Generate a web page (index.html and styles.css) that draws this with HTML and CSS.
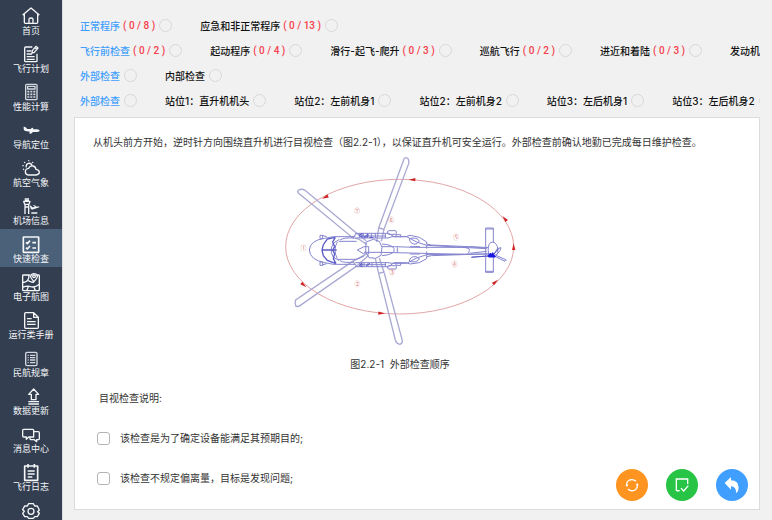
FILE: index.html
```html
<!DOCTYPE html>
<html lang="zh-CN">
<head>
<meta charset="utf-8">
<meta name="viewport" content="width=device-width, initial-scale=1">
<title>快速检查</title>
<link rel="stylesheet" href="styles.css">
</head>
<body>
<nav class="sidebar">
  <a class="nav-item" href="#"><svg class="nav-icon" viewBox="0 0 54 54"><path d="M2 24 27 3l25 21M7 21v25q0 3 3 3h34q3 0 3-3V21M21 48V37q0-4 6-4t6 4v11"/></svg><span>首页</span></a>
  <a class="nav-item" href="#"><svg class="nav-icon" viewBox="0 0 54 54"><path d="M31 6H11q-3 0-3 3v38q0 3 3 3h31q3 0 3-3V26M14 18h14M14 27h16M14 35h24M14 43h24"/><path d="M30 24l1-7L42 4l6 5-11 13zM39 8l6 5"/></svg><span>飞行计划</span></a>
  <a class="nav-item" href="#"><svg class="nav-icon soft" viewBox="0 0 54 54"><rect x="11" y="4" width="34" height="46" rx="3"/><path d="M17 10h22v8H17z"/><path class="dots" d="M16 26h6m3 0h6m3 0h6M16 34h6m3 0h6m3 0h6M16 42h6m3 0h6m3 0h6"/></svg><span>性能计算</span></a>
  <a class="nav-item" href="#"><svg class="nav-icon" viewBox="0 0 54 54"><path class="fill" d="M5 17l5 1 6 6 10 0 4-4 4 1-1 4 12 0q8 1 8 4t-7 4l-13 0-6 5-6-1 3-5-14-2q-5-2-5-6z"/></svg><span>导航定位</span></a>
  <a class="nav-item" href="#"><svg class="nav-icon" viewBox="0 0 54 54"><path d="M19 48q-9-1-9-10t10-10q4-9 13-7 8 2 9 10 10 2 10 9t-10 8zM13 25q-2-10 7-12 7-1 10 6M20 4v3M7 9l2 3M1 20h4M33 9l-2 3M3 32l3-2"/></svg><span>航空气象</span></a>
  <a class="nav-item" href="#"><svg class="nav-icon" viewBox="0 0 54 54"><path d="M8 6h13M5 13h19l-3 9H8zM9 23v28M20 23v28M10 30h9"/><path class="fill" d="M8 8h13v4H8zM23 25l4 1 4 5 8-1-6-5 3-1 9 5 6-1 1 3-22 7-4-3zM28 46h18v4H28z"/></svg><span>机场信息</span></a>
  <a class="nav-item active" href="#" aria-current="page"><svg class="nav-icon bold" viewBox="0 0 54 54"><rect x="4" y="6" width="46" height="46" rx="1"/><path d="M12 22l4 4 8-9M12 38l4 4 8-9M31 23h11M31 39h11"/></svg><span>快速检查</span></a>
  <a class="nav-item" href="#"><svg class="nav-icon" viewBox="0 0 54 54"><path d="M24 6H4q-2 0-2 2v42q0 3 3 3h44q3 0 3-3V8q0-2-3-2h-3M2 29q13-2 17-11 3-6 1-12M2 43q14-6 24-2 12 4 26-7M17 22l11 5 8 1M20 39l-6 14M36 42l4 11M36 26Q25 14 26 9q2-7 10-7t10 7q1 5-10 17z"/><circle cx="36" cy="10" r="4"/></svg><span>电子航图</span></a>
  <a class="nav-item" href="#"><svg class="nav-icon" viewBox="0 0 54 54"><path d="M35 5H11q-3 0-3 3v41q0 3 3 3h35q3 0 3-3V19zM35 5v14h14M15 23h14M15 32h26M15 40h26"/></svg><span>运行类手册</span></a>
  <a class="nav-item" href="#"><svg class="nav-icon soft" viewBox="0 0 54 54"><rect x="11" y="10" width="34" height="40" rx="4"/><path d="M17 19h3M24 19h16M17 26h3M24 26h16M17 33h3M24 33h16M17 41h3M24 41h16"/></svg><span>民航规章</span></a>
  <a class="nav-item" href="#"><svg class="nav-icon" viewBox="0 0 54 54"><path d="M35 6L20 22h8v16h14V22h8zM19 44h32M19 51h32"/></svg><span>数据更新</span></a>
  <a class="nav-item" href="#"><svg class="nav-icon" viewBox="0 0 54 54"><path d="M35 36H20l-7 7v-7H5q-3 0-3-3V16q0-3 3-3h27q3 0 3 3zM35 20h14q3 0 3 3v18q0 3-3 3h-5v6l-7-6H27q-3 0-3-3v-5"/></svg><span>消息中心</span></a>
  <a class="nav-item" href="#"><svg class="nav-icon bold" viewBox="0 0 54 54"><path d="M8 9h39v43H8zM18 3v11M37 3v11M17 24h21M17 33h21M17 42h14"/></svg><span>飞行日志</span></a>
  <a class="nav-item" href="#" aria-label="设置"><svg class="nav-icon" viewBox="0 0 54 54"><path d="M20 8h14l4 7h8l6 12-5 5 5 5-6 10h-8l-4 5H20l-4-5H8L2 37l5-6-5-5 6-11h8z"/><circle cx="27" cy="31" r="9"/></svg></a>
</nav>

<main class="main">
  <div class="tabs">
    <div class="tab-row">
      <button class="tab active">正常程序<span class="count">( 0 / 8 )</span><i class="ring"></i></button>
      <button class="tab">应急和非正常程序<span class="count">( 0 / 13 )</span><i class="ring"></i></button>
    </div>
    <div class="tab-row">
      <button class="tab active">飞行前检查<span class="count">( 0 / 2 )</span><i class="ring"></i></button>
      <button class="tab">起动程序<span class="count">( 0 / 4 )</span><i class="ring"></i></button>
      <button class="tab">滑行-起飞-爬升<span class="count">( 0 / 3 )</span><i class="ring"></i></button>
      <button class="tab">巡航飞行<span class="count">( 0 / 2 )</span><i class="ring"></i></button>
      <button class="tab">进近和着陆<span class="count">( 0 / 3 )</span><i class="ring"></i></button>
      <button class="tab">发动机</button>
    </div>
    <div class="tab-row">
      <button class="tab active">外部检查<i class="ring"></i></button>
      <button class="tab">内部检查<i class="ring"></i></button>
    </div>
    <div class="tab-row">
      <button class="tab active">外部检查<i class="ring"></i></button>
      <button class="tab">站位1：直升机机头<i class="ring"></i></button>
      <button class="tab">站位2：左前机身1<i class="ring"></i></button>
      <button class="tab">站位2：左前机身2<i class="ring"></i></button>
      <button class="tab">站位3：左后机身1<i class="ring"></i></button>
      <button class="tab">站位3：左后机身2<i class="ring"></i></button>
    </div>
  </div>

  <section class="panel">
    <p class="intro">从机头前方开始，逆时针方向围绕直升机进行目视检查（图2.2-1），以保证直升机可安全运行。外部检查前确认地勤已完成每日维护检查。</p>
    <figure class="figure">
      <svg class="diagram" viewBox="0 0 720 600" role="img" aria-label="外部检查顺序">
        <defs>
          <path id="arrow" d="M-12 0 8-5V5z"/>
        </defs>
        <ellipse class="route" cx="359" cy="290" rx="342" ry="202"/>
        <g class="arrows">
          <use href="#arrow" transform="translate(137 141) rotate(-25)"/>
          <use href="#arrow" transform="translate(70 404) rotate(220)"/>
          <use href="#arrow" transform="translate(303 490) rotate(183)"/>
          <use href="#arrow" transform="translate(398 89)"/>
          <use href="#arrow" transform="translate(675 207) rotate(50)"/>
          <use href="#arrow" transform="translate(701 292) rotate(90)"/>
          <use href="#arrow" transform="translate(645 397) rotate(140)"/>
        </g>
        <g class="blades">
          <path d="M230 250 75 121q-9-6-19-1-5 4-1 9l163 134zM230 250l28 22M218 263l18 4 24 16"/>
          <path d="M296 234 372 27q4-8 12-1 4 7 2 15L312 238zM296 234l16 4-8 36M296 234l-6 42"/>
          <path d="M218 334 47 450q-4 9 1 19 6 2 13-3L230 348zM218 334l38-20M230 348l36-32"/>
          <path d="M296 370 346 570q4 12 14 13 8-3 7-11L312 366zM296 370l16-4-14-42M296 370l-10-44"/>
        </g>
        <g class="body">
          <path d="M134 265q-44 6-46 35 2 30 46 38M134 265l26-5h66M134 338l26 5h66M176 274h54M174 328h54q14-4 24-10"/>
          <path d="M172 276q-14 24 0 50M178 268l-18 12-6 14v14l6 14 18 10M180 270q12-8 42-6M180 332q12 8 42 4"/>
          <path d="M120 256h8v10h-8zM120 336h8v10h-8zM126 256l14 4M126 345l14-4"/>
          <path d="M232 300l20-10h14v22h-14zM258 276l22-8 18 6 8 18-3 24-16 9-20-2-10-16z"/>
          <path d="M306 282q32 2 36 14v9q-10 10-36 12M306 290h38l60 2h140q28 1 24 9-2 14-14 12l-250-6h-52M352 292v16"/>
          <path d="M226 250h100l16 10h36l12-4 28 6 22 14v6l14 3 180 8M226 350h100l16-12h36l12 4 28-4 22-12v-6l14-3 180-6"/>
          <path d="M226 264h98l12-4h44l30 16 30 10 180 10M226 338h98l12 2h44l30-16 30-10 190-2"/>
          <path d="M326 242h20q3 0 3 4v4q0 3-3 3h-20q-3 0-3-3v-4q0-4 3-4zM326 347h20q3 0 3 3v4q0 3-3 3h-20q-3 0-3-3v-4q0-3 3-3zM388 266q24-6 30 8l-10 8q-18 2-20-16zM388 334q24 6 30-8l-10-6q-18-2-20 14zM390 290h30M390 312h30"/>
          <path d="M238 250v14M250 250v14M262 250v14M274 250v14M286 250v14M316 250v14M240 258h78M240 338v12M252 338v12M264 338v12M276 338v12M316 338v12M240 344h78M348 262v-8h14v8M348 338v8h14v-8M440 284v12M440 304v16M570 290l50 5M568 310l52-6"/>
          <path d="M617 234h23v133h-23zM617 237h23M617 364h23"/>
          <path class="white" d="M626 312q-5-25 6-35 14-3 20 12l2 20-12 10z"/>
          <path d="M642 313l10-17 11-3-3 9-12 14M645 319l30 15 4-4-31-14M575 321l50-3"/>
        </g>
        <path class="windscreen" d="M166 262l-24 5-12 17-4 16 4 17 12 14 26 10M126 300h32M166 262l-8 14 6 14-6 10 6 12-4 14 8 15M158 300h12"/>
        <path class="accent" d="M238 256l8-6v12zM252 262l12-10v8zM268 262h12M238 346l8 4v-10zM258 348l12-8M574 322l50-4M640 314l16-18"/>
        <path class="hub" d="M624 318l6-8 6 3 2-5 5 8 3 5h-20z"/>
        <g class="marks">
          <text x="71" y="301">①</text><text x="232" y="409">②</text><text x="336" y="373">③</text><text x="524" y="347">④</text><text x="528" y="266">⑤</text><text x="334" y="217">⑥</text><text x="231" y="189">⑦</text>
        </g>
      </svg>
      <figcaption>图2.2-1&nbsp; 外部检查顺序</figcaption>
    </figure>
    <h2 class="notes-title">目视检查说明:</h2>
    <div class="checks">
      <label class="check"><input type="checkbox">该检查是为了确定设备能满足其预期目的;</label>
      <label class="check"><input type="checkbox">该检查不规定偏离量，目标是发现问题;</label>
    </div>
    <div class="actions">
      <button class="action orange" aria-label="刷新"><svg viewBox="0 0 48 48"><path d="M8 25Q7 13 17 9q11-4 19 4M40 23q1 12-9 17-11 4-19-4"/><path class="fill" d="M4 23h9l-4 7zM44 25h-9l5-7z"/></svg></button>
      <button class="action green" aria-label="完成"><svg viewBox="0 0 48 48"><path d="M41 21V6H7v34q4 2 10 1M21 34l8 8 14-16"/></svg></button>
      <button class="action blue" aria-label="返回"><svg viewBox="0 0 48 48"><path class="fill" d="M2 18 21 0v10q23 1 23 22 0 11-8 17 2-19-15-21v10z"/></svg></button>
    </div>
  </section>
</main>
</body>
</html>
```
FILE: styles.css
```css
* {
  box-sizing: border-box;
}

body {
  margin: 0;
  height: 100vh;
  display: flex;
  overflow: hidden;
  background: #f1f1f1;
  color: #333;
  font: 10px/16px Inter, "Noto Sans CJK SC", sans-serif;
}

button {
  border: 0;
  padding: 0;
  background: none;
  font: inherit;
  cursor: pointer;
}

svg {
  display: block;
}

/* Sidebar */
.sidebar {
  flex: 0 0 62px;
  padding-top: 1px;
  overflow: hidden;
  background: #333e50;
}

.nav-item {
  display: flex;
  flex-direction: column;
  align-items: center;
  height: 38px;
  padding-top: 6px;
  color: #f4f6f8;
  font-size: 9px;
  line-height: 12px;
  text-decoration: none;
  white-space: nowrap;
}

.nav-item.active {
  background: #4b6079;
}

.nav-icon {
  flex: none;
  width: 18px;
  height: 18px;
  overflow: visible;
  fill: none;
  stroke: #f4f6f8;
  stroke-width: 4;
  stroke-linejoin: round;
}

.nav-icon.bold {
  stroke-width: 5;
}

.nav-icon.soft {
  stroke: #d3d8df;
  stroke-width: 4;
}

.nav-icon .dots {
  stroke-width: 5;
}

.nav-icon .fill {
  fill: #f4f6f8;
  stroke: none;
}

/* Main column */
.main {
  flex: 1;
  min-width: 0;
  display: flex;
  flex-direction: column;
  padding: 13px 12px 10px 11px;
  border-left: 1px solid #dcdde3;
}

.tabs {
  overflow: hidden;
  padding-left: 6px;
  margin-bottom: 4px;
}

.tab-row {
  display: flex;
  gap: 28px;
  height: 25px;
  align-items: center;
}

.tab {
  flex: none;
  display: flex;
  align-items: center;
  color: #111;
  font-weight: 500;
  white-space: nowrap;
}

.tab.active {
  color: #409eff;
}

.count {
  margin-left: 3px;
  color: #f5404c;
  font-family: Roboto, sans-serif;
}

.ring {
  width: 13px;
  height: 13px;
  margin-left: 4px;
  border: 1px solid #d8d8d8;
  border-radius: 50%;
}

/* Content panel */
.panel {
  position: relative;
  flex: 1;
  min-height: 0;
  padding: 16px 52px 0 18px;
  border: 1px solid #dcdcdc;
  background: #fff;
}

.intro {
  margin: 0;
}

.figure {
  margin: 0;
  display: flex;
  flex-direction: column;
  align-items: center;
}

.diagram {
  width: 240px;
  height: 200px;
  margin-bottom: 6px;
  fill: none;
}

.route {
  stroke: #e2a6a6;
  stroke-width: 3;
}

.arrows {
  fill: #cf2222;
}

.blades {
  stroke: #a9a9d3;
  stroke-width: 4;
}

.body {
  stroke: #8585cf;
  stroke-width: 3;
}

.body .white {
  fill: #fff;
}

.windscreen {
  stroke: #5c5cc8;
  stroke-width: 4;
}

.accent {
  stroke: #5757c9;
  stroke-width: 3;
}

.hub {
  fill: #1919e0;
  stroke: #1919e0;
  stroke-width: 3;
}

.marks {
  fill: #d66a6a;
  font-family: "Noto Sans CJK SC", sans-serif;
  font-size: 17px;
  text-anchor: middle;
}

.notes-title {
  margin: 18px 0 0 6px;
  font-size: 10px;
  font-weight: 400;
}

.checks {
  display: grid;
  gap: 24px;
  margin: 24px 0 0 4px;
}

.check {
  display: flex;
  align-items: center;
  gap: 10px;
}

.check input {
  appearance: none;
  width: 13px;
  height: 13px;
  margin: 0;
  border: 1px solid #b4b4b4;
  border-radius: 3px;
  background: #fff;
}

/* Floating actions */
.actions {
  position: absolute;
  right: 11px;
  bottom: 8px;
  display: flex;
  gap: 18px;
}

.action {
  display: grid;
  place-items: center;
  width: 32px;
  height: 32px;
  border-radius: 50%;
}

.action svg {
  width: 16px;
  height: 16px;
  fill: none;
  stroke: #fff;
  stroke-width: 4;
}

.action .fill {
  fill: #fff;
  stroke: none;
}

.orange {
  background: #ff9420;
}

.green {
  background: #28c445;
}

.blue {
  background: #409eff;
}
```
